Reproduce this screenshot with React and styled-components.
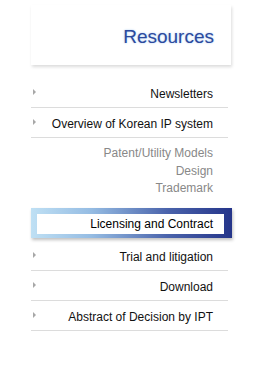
import React from 'react';
import styled, { createGlobalStyle } from 'styled-components';

const GlobalStyle = createGlobalStyle`
  body {
    margin: 0;
    background: #fff;
    font-family: "Liberation Sans", Arial, sans-serif;
  }
`;

const Sidebar = styled.div`
  width: 201px;
  margin-left: 31px;
  padding-top: 5px;
`;

const TitleBox = styled.div`
  width: 200px;
  height: 60px;
  box-sizing: border-box;
  padding: 21px 17px 0 0;
  text-align: right;
  background: #fff;
  box-shadow: 1px 2px 3px rgba(0, 0, 0, 0.14);
  margin-bottom: 13px;
`;

const Title = styled.h2`
  margin: 0;
  font-size: 19px;
  line-height: 22px;
  font-weight: normal;
  color: #2c4a9d;
  text-shadow: 0 0 2px rgba(150, 190, 235, 0.9);
`;

const Menu = styled.ul`
  list-style: none;
  margin: 0;
  padding: 0;
  width: 197px;
`;

const Item = styled.li`
  position: relative;
  height: 30px;
  box-sizing: border-box;
  padding: 3px 15px 0 0;
  line-height: 26px;
  font-size: 12px;
  color: #111;
  text-align: right;
  border-bottom: 1px solid #dcdcdc;

  &::before {
    content: '';
    position: absolute;
    left: 2px;
    top: 11px;
    border-left: 3px solid #a8a8a8;
    border-top: 3px solid transparent;
    border-bottom: 3px solid transparent;
  }
`;

const SubMenu = styled.ul`
  list-style: none;
  margin: 0;
  padding: 7px 15px 10px 0;
  text-align: right;
`;

const SubItem = styled.li`
  font-size: 12px;
  line-height: 17.5px;
  color: #888;
`;

const ActiveWrap = styled.li`
  width: 201px;
  box-sizing: border-box;
  padding: 6px 8px 4px 6px;
  margin-bottom: 3px;
  background: linear-gradient(to right, #bfe0f4 0%, #95bce3 30%, #4a63ab 68%, #25358a 100%);
  box-shadow: 1px 2px 3px rgba(0, 0, 0, 0.25);
`;

const ActiveLabel = styled.div`
  background: #fff;
  height: 20px;
  line-height: 20px;
  padding-right: 11px;
  text-align: right;
  font-size: 12px;
  color: #000;
`;

const items = ['Newsletters', 'Overview of Korean IP system'];
const subs = ['Patent/Utility Models', 'Design', 'Trademark'];
const rest = ['Trial and litigation', 'Download', 'Abstract of Decision by IPT'];

export default function App() {
  return (
    <>
      <GlobalStyle />
      <Sidebar>
        <TitleBox>
          <Title>Resources</Title>
        </TitleBox>
        <Menu>
          {items.map((label) => (
            <Item key={label}>{label}</Item>
          ))}
          <li>
            <SubMenu>
              {subs.map((label) => (
                <SubItem key={label}>{label}</SubItem>
              ))}
            </SubMenu>
          </li>
          <ActiveWrap>
            <ActiveLabel>Licensing and Contract</ActiveLabel>
          </ActiveWrap>
          {rest.map((label) => (
            <Item key={label}>{label}</Item>
          ))}
        </Menu>
      </Sidebar>
    </>
  );
}
